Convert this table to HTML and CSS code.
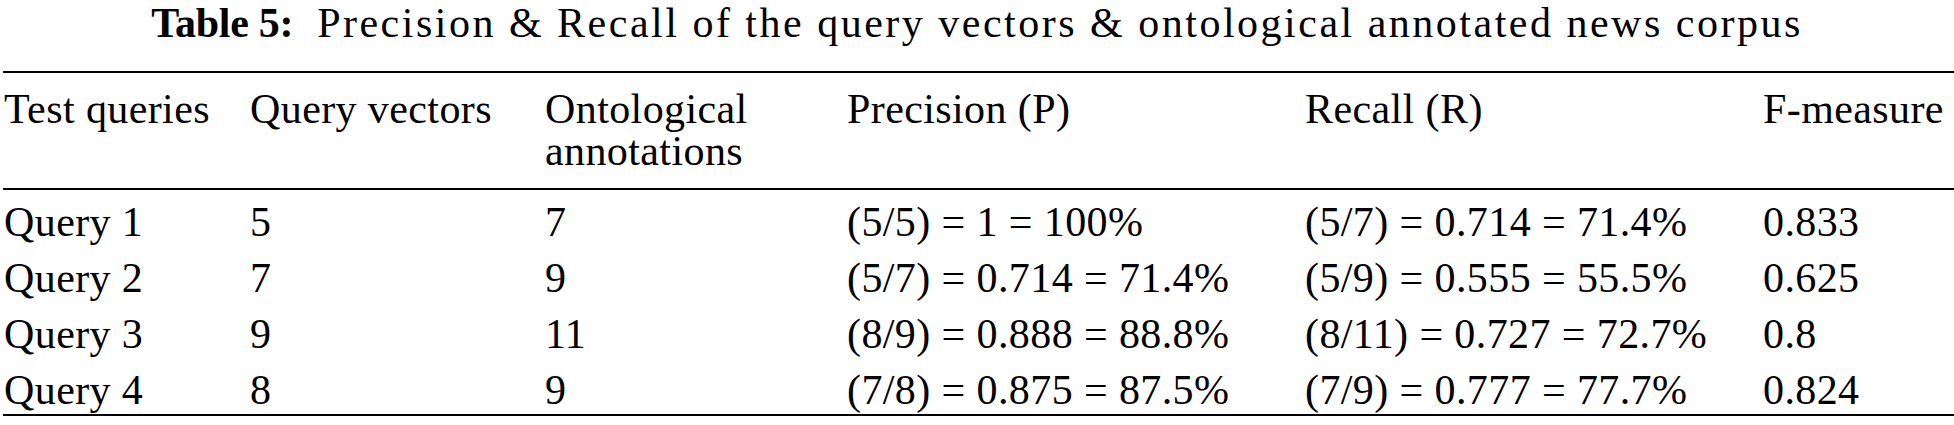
FILE: index.html
```html
<!DOCTYPE html>
<html lang="en">
<head>
<meta charset="utf-8">
<title>Table 5</title>
<link rel="stylesheet" href="styles.css">
</head>
<body>
<div class="title"><span class="label">Table 5:</span><span class="caption">Precision &amp; Recall of the query vectors &amp; ontological annotated news corpus</span></div>
<table class="data">
<colgroup>
<col class="c1"><col class="c2"><col class="c3"><col class="c4"><col class="c5"><col class="c6">
</colgroup>
<thead>
<tr>
<th>Test queries</th>
<th>Query vectors</th>
<th>Ontological<br>annotations</th>
<th>Precision (P)</th>
<th>Recall (R)</th>
<th>F-measure</th>
</tr>
</thead>
<tbody>
<tr><td>Query 1</td><td>5</td><td>7</td><td>(5/5) = 1 = 100%</td><td>(5/7) = 0.714 = 71.4%</td><td>0.833</td></tr>
<tr><td>Query 2</td><td>7</td><td>9</td><td>(5/7) = 0.714 = 71.4%</td><td>(5/9) = 0.555 = 55.5%</td><td>0.625</td></tr>
<tr><td>Query 3</td><td>9</td><td>11</td><td>(8/9) = 0.888 = 88.8%</td><td>(8/11) = 0.727 = 72.7%</td><td>0.8</td></tr>
<tr class="last"><td>Query 4</td><td>8</td><td>9</td><td>(7/8) = 0.875 = 87.5%</td><td>(7/9) = 0.777 = 77.7%</td><td>0.824</td></tr>
</tbody>
</table>
</body>
</html>
```
FILE: styles.css
```css
html, body {
  margin: 0;
  padding: 0;
  background: #fff;
}
body {
  font-family: "Liberation Serif", "Times New Roman", serif;
  font-size: 42px;
  color: #000;
}
.title {
  height: 47px;
  line-height: 47px;
  text-align: center;
  white-space: nowrap;
  margin-bottom: 24px;
}
.title .label {
  font-weight: bold;
  letter-spacing: -0.3px;
}
.title .caption {
  margin-left: 24px;
  letter-spacing: 2.5px;
}
.data {
  margin-left: 3px;
  width: 1951px;
  table-layout: fixed;
  border-collapse: separate;
  border-spacing: 0;
  letter-spacing: 0.4px;
}
.c1 { width: 246px; }
.c2 { width: 295px; }
.c3 { width: 302px; }
.c4 { width: 458px; }
.c5 { width: 458px; }
.c6 { width: 192px; }
.data th,
.data td {
  text-align: left;
  vertical-align: top;
  line-height: 42px;
  padding: 0 0 0 1px;
  white-space: nowrap;
  font-weight: normal;
}
.data th {
  border-top: 2px solid #000;
  border-bottom: 2px solid #000;
  padding-top: 15px;
  padding-bottom: 16px;
}
.data td {
  padding-top: 11px;
  padding-bottom: 3px;
}
.data tr.last td {
  border-bottom: 2px solid #000;
}
```
